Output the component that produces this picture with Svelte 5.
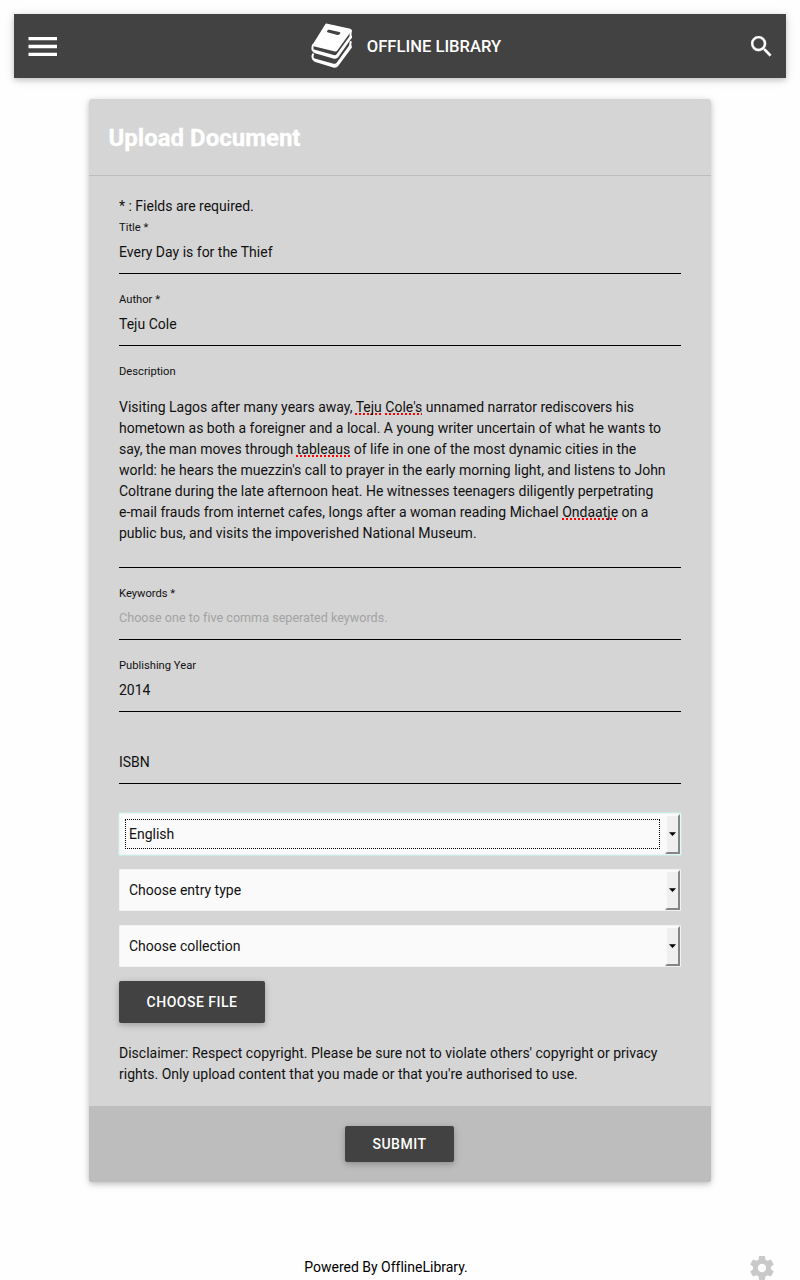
<script>
  const selects = [
    { label: 'English', focused: true },
    { label: 'Choose entry type', focused: false },
    { label: 'Choose collection', focused: false }
  ];
</script>

<div class="page">
  <header class="bar">
    <svg class="menu" viewBox="0 0 30 20" width="30" height="20" aria-label="Menu"><path d="M.5 1h28.5v3.3H.5zM.5 8.8h28.5v3.4H.5zM.5 16.8h28.5v3.2H.5z" fill="#fff" /></svg>
    <div class="brand">
      <svg viewBox="15 15 126 138" width="42" height="46" aria-hidden="true">
        <path fill="#fff" fill-rule="evenodd" d="M57 20Q59 16 64 17L133 32Q139 34 136 39L95 96Q91 102 84 100L23 85Q18 83 21 78ZM67 35Q63 37 63 40L64 43L94 51Q99 51 102 47Q105 43 100 42L70 35Z" />
        <path fill="none" stroke="#fff" stroke-width="6" stroke-linecap="round" stroke-linejoin="round" d="M22 80Q18 85 20 96" />
        <path fill="#fff" d="M17 92Q20 94 27 95L83 111Q89 113 93 107L133 52Q138 54 137 60L97 117Q92 124 84 122L27 106Q18 102 17 92Z" />
        <path fill="none" stroke="#fff" stroke-width="6" stroke-linecap="round" d="M135 39Q132 47 135 58M21 109Q18 116 21 122M134 72Q132 80 134 88" />
        <path fill="#fff" d="M18 117Q22 120 29 122L83 137Q89 139 93 133L132 79Q138 83 137 89L96 145Q92 150 84 149L28 132Q18 128 18 117Z" />
      </svg>
      <span>OFFLINE LIBRARY</span>
    </div>
    <svg class="search" viewBox="3 3 18 18" width="21" height="21" aria-label="Search"><path fill="#fff" stroke="#fff" stroke-width=".25" d="M15.5 14h-.79l-.28-.27A6.471 6.471 0 0 0 16 9.5 6.5 6.5 0 1 0 9.5 16c1.61 0 3.09-.59 4.23-1.57l.27.28v.79l5 4.99L20.49 19l-4.99-5zm-6 0C7.01 14 5 11.99 5 9.5S7.01 5 9.5 5 14 7.01 14 9.5 11.99 14 9.5 14z" /></svg>
  </header>

  <main class="card">
    <h1>Upload Document</h1>
    <div class="body">
      <p class="note">* : Fields are required.</p>
      <div class="field first"><div class="label">Title *</div><div class="value">Every Day is for the Thief</div></div>
      <div class="field"><div class="label">Author *</div><div class="value">Teju Cole</div></div>
      <div class="field">
        <div class="label">Description</div>
        <div class="area">Visiting Lagos after many years away, <u>Teju</u> <u>Cole's</u> unnamed narrator rediscovers his<br />hometown as both a foreigner and a local. A young writer uncertain of what he wants to<br />say, the man moves through <u>tableaus</u> of life in one of the most dynamic cities in the<br />world: he hears the muezzin's call to prayer in the early morning light, and listens to John<br />Coltrane during the late afternoon heat. He witnesses teenagers diligently perpetrating<br />e-mail frauds from internet cafes, longs after a woman reading Michael <u>Ondaatje</u> on a<br />public bus, and visits the impoverished National Museum.</div>
      </div>
      <div class="field"><div class="label">Keywords *</div><div class="value hint">Choose one to five comma seperated keywords.</div></div>
      <div class="field"><div class="label">Publishing Year</div><div class="value">2014</div></div>
      <div class="field"><div class="label"></div><div class="value">ISBN</div></div>
      <div class="selects">
        {#each selects as item}
          <div class="select" class:focused={item.focused}>
            <span class="choice">{item.label}</span>
            <span class="arrow"><svg viewBox="0 0 7 4" width="7" height="4"><path d="M0 0.3h7L3.5 4z" /></svg></span>
          </div>
        {/each}
      </div>
      <button class="file">CHOOSE FILE</button>
      <p class="disclaimer">Disclaimer: Respect copyright. Please be sure not to violate others' copyright or privacy<br />rights. Only upload content that you made or that you're authorised to use.</p>
    </div>
    <div class="actions"><button>SUBMIT</button></div>
  </main>

  <footer>
    <span>Powered By OfflineLibrary.</span>
    <svg viewBox="2 2 20 20" width="24" height="24" aria-label="Settings"><path fill="#c9c9c9" d="M19.43 12.98c.04-.32.07-.64.07-.98s-.03-.66-.07-.98l2.11-1.65c.19-.15.24-.42.12-.64l-2-3.46c-.12-.22-.39-.3-.61-.22l-2.49 1c-.52-.4-1.08-.73-1.69-.98l-.38-2.65A.488.488 0 0 0 14 2h-4c-.25 0-.46.18-.49.42l-.38 2.65c-.61.25-1.17.59-1.69.98l-2.49-1c-.23-.09-.49 0-.61.22l-2 3.46c-.13.22-.07.49.12.64l2.11 1.65c-.04.32-.07.65-.07.98s.03.66.07.98l-2.11 1.65c-.19.15-.24.42-.12.64l2 3.46c.12.22.39.3.61.22l2.49-1c.52.4 1.08.73 1.69.98l.38 2.65c.03.24.24.42.49.42h4c.25 0 .46-.18.49-.42l.38-2.65c.61-.25 1.17-.59 1.69-.98l2.49 1c.23.09.49 0 .61-.22l2-3.46c.12-.22.07-.49-.12-.64l-2.11-1.65zM12 15.5c-1.93 0-3.5-1.57-3.5-3.5s1.57-3.5 3.5-3.5 3.5 1.57 3.5 3.5-1.57 3.5-3.5 3.5z" /></svg>
  </footer>
</div>

<style>
  :global(body) { background: #fefefe; }
  .page {
    box-sizing: border-box;
    height: 1280px;
    padding: 14px 14px 0;
    overflow: hidden;
    display: flex;
    flex-direction: column;
    font: 14px/21px Roboto, sans-serif;
    font-variant-ligatures: none;
    color: #111;
  }
  .bar {
    height: 64px;
    box-sizing: border-box;
    flex: none;
    background: #424242;
    display: grid;
    grid-template-columns: 1fr auto 1fr;
    align-items: center;
    padding: 0 14px;
    box-shadow: 0 2px 5px rgba(0, 0, 0, .16), 0 2px 10px rgba(0, 0, 0, .12);
  }
  svg { display: block; }
  .search { justify-self: end; }
  .brand { display: flex; align-items: center; color: #fff; font-size: 16.6px; font-weight: 500; margin-left: 12px; }
  .brand span { margin-left: 14px; }
  .card {
    width: 622px;
    height: 1083px;
    flex: none;
    display: flex;
    flex-direction: column;
    margin: 21px auto 0;
    background: #d5d5d5;
    border-radius: 3px;
    overflow: hidden;
    box-shadow: 0 2px 5px rgba(0, 0, 0, .16), 0 2px 10px rgba(0, 0, 0, .12);
  }
  h1 {
    margin: 0;
    box-sizing: border-box;
    height: 77px;
    padding: 1px 19.5px 0;
    font-size: 24px;
    line-height: 76px;
    font-weight: 700;
    -webkit-text-stroke: .3px #fff;
    color: #fff;
    border-bottom: 1px solid #bcbcbc;
  }
  .body { padding: 20px 30px 0; flex: 1; }
  p { margin: 0; }
  .field { margin-top: 15px; border-bottom: 1px solid #000; }
  .field.first { margin-top: 0; }
  .label { box-sizing: border-box; height: 20px; padding-top: 1px; font-size: 11.2px; line-height: 20px; }
  .value { height: 30px; line-height: 30px; padding-bottom: 6px; }
  .hint { font-size: 12.6px; color: #a3a3a3; }
  .area { padding: 16px 0 23px; white-space: nowrap; }
  u { text-decoration: underline dotted #f00 2px; text-underline-offset: 1px; text-decoration-skip-ink: none; }
  .selects { margin-top: 29px; display: flex; flex-direction: column; gap: 14px; }
  .select {
    box-sizing: border-box;
    height: 42px;
    padding: 0 0 0 1px;
    display: flex;
    background: #fafafa;
    border: 1px solid #f2f2f2;
    border-radius: 1px;
  }
  .select.focused { box-shadow: 0 0 0 1px #c3ece6; }
  .choice { flex: 1; padding-left: 8px; line-height: 40px; }
  .focused .choice { margin: 5px 5px 5px 4px; padding-left: 3px; line-height: 28px; border: 1px dotted #000; }
  .arrow {
    box-sizing: border-box;
    width: 15px;
    background: #efefef;
    border: 2px solid;
    border-color: #fafafa #858585 #858585 #fafafa;
    display: flex;
    align-items: center;
    justify-content: center;
  }
  button {
    display: block;
    border: 0;
    border-radius: 2px;
    padding: 0;
    background: #424242;
    color: #fff;
    font: 500 14px/36px Roboto, sans-serif;
    letter-spacing: .5px;
    width: 109px;
    height: 36px;
    box-shadow: 0 2px 5px rgba(0, 0, 0, .16), 0 2px 10px rgba(0, 0, 0, .12);
  }
  .file { width: 146px; height: 42px; line-height: 42px; margin-top: 14px; }
  .disclaimer { margin-top: 20px; white-space: nowrap; }
  .actions { height: 76px; flex: none; background: #bdbdbd; display: flex; align-items: center; justify-content: center; padding-right: 1px; }
  footer { margin-top: 74px; height: 24px; display: grid; grid-template-columns: 1fr auto 1fr; align-items: center; padding-right: 12px; }
  footer span { grid-column: 2; color: #000; margin: 0 16px 2px 0; }
  footer svg { justify-self: end; }
</style>
